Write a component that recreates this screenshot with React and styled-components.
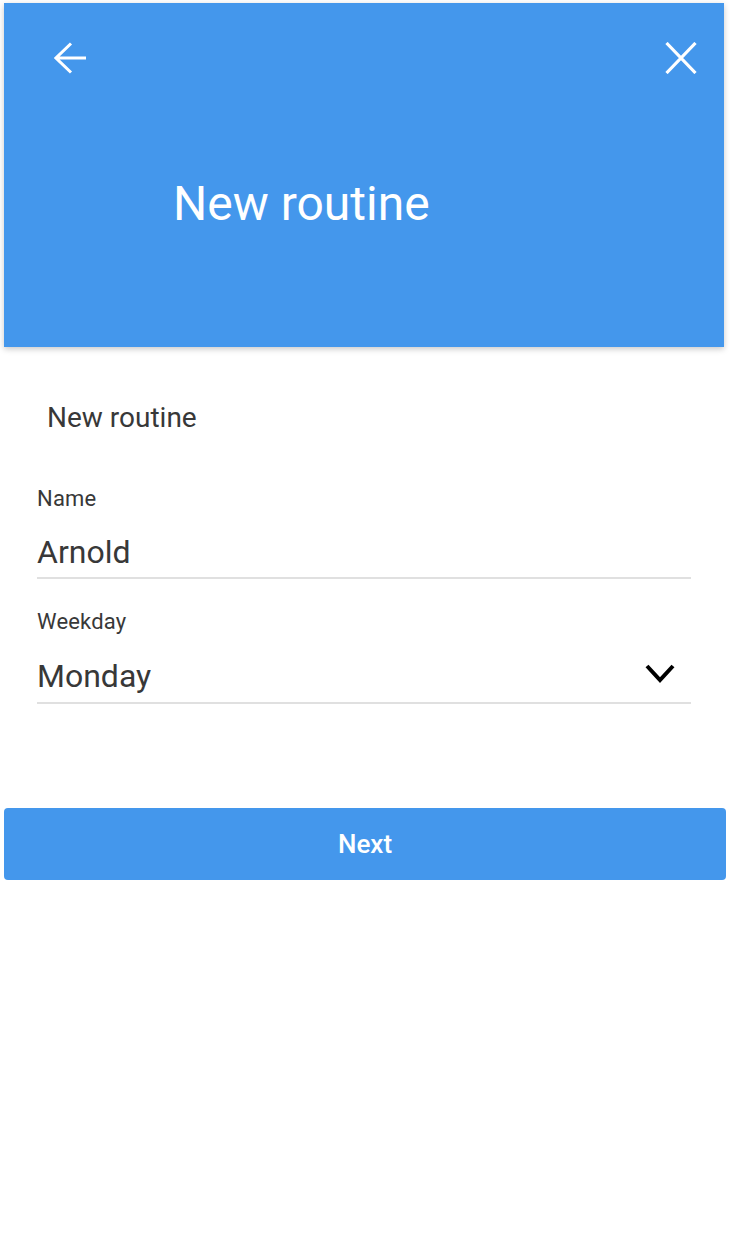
import { useState } from 'react';
import styled, { createGlobalStyle } from 'styled-components';

const WEEKDAYS = ['Monday', 'Tuesday', 'Wednesday', 'Thursday', 'Friday', 'Saturday', 'Sunday'];

const GlobalStyle = createGlobalStyle`
  body {
    margin: 0;
    background: #ffffff;
    font-family: Roboto, "Liberation Sans", Arial, sans-serif;
  }
`;

const BackIcon = () => (
  <svg width="32" height="32" viewBox="0 0 32 32" fill="none" aria-hidden>
    <path d="M17 1.5 L2 16 L17 30.5 M2 16 H32" stroke="#fff" strokeWidth="3" />
  </svg>
);

const CloseIcon = () => (
  <svg width="32" height="32" viewBox="0 0 32 32" fill="none" aria-hidden>
    <path d="M1.5 1 L30.5 31 M30.5 1 L1.5 31" stroke="#fff" strokeWidth="3.2" />
  </svg>
);

const ChevronIcon = () => (
  <svg width="30" height="22" viewBox="0 0 30 22" fill="none" aria-hidden>
    <path d="M2 3 L15 17 L28 3" stroke="#000" strokeWidth="4" />
  </svg>
);

const App = () => {
  const [name, setName] = useState('Arnold');
  const [weekday, setWeekday] = useState('Monday');

  return (
    <Page>
      <GlobalStyle />
      <Header>
        <TopBar>
          <IconButton type="button" aria-label="Back">
            <BackIcon />
          </IconButton>
          <IconButton type="button" aria-label="Close">
            <CloseIcon />
          </IconButton>
        </TopBar>
        <Title>New routine</Title>
      </Header>

      <Form onSubmit={(e) => e.preventDefault()}>
        <Subtitle>New routine</Subtitle>

        <Field>
          <Label htmlFor="routine-name">Name</Label>
          <TextInput
            id="routine-name"
            value={name}
            onChange={(e) => setName(e.target.value)}
          />
        </Field>

        <Field>
          <Label htmlFor="routine-weekday">Weekday</Label>
          <SelectWrap>
            <Select
              id="routine-weekday"
              value={weekday}
              onChange={(e) => setWeekday(e.target.value)}
            >
              {WEEKDAYS.map((d) => (
                <option key={d} value={d}>{d}</option>
              ))}
            </Select>
            <Chevron>
              <ChevronIcon />
            </Chevron>
          </SelectWrap>
        </Field>
      </Form>

      <NextButton type="button">Next</NextButton>
    </Page>
  );
};

const Page = styled.div`
  padding: 3px 4px 40px;
  width: 722px;
  box-sizing: content-box;
`;

const Header = styled.header`
  width: 720px;
  height: 344px;
  box-sizing: border-box;
  padding: 39px 27px 0 50px;
  background-color: #4497ec;
  box-shadow: 0 2px 6px rgba(0, 0, 0, 0.22);
`;

const TopBar = styled.div`
  display: flex;
  justify-content: space-between;
  align-items: center;
  height: 32px;
`;

const IconButton = styled.button`
  width: 32px;
  height: 32px;
  padding: 0;
  border: none;
  background: transparent;
  display: flex;
  cursor: pointer;
`;

const Title = styled.h1`
  margin: 106px 0 0 119px;
  font-size: 48px;
  line-height: 48px;
  font-weight: 400;
  color: #ffffff;
`;

const Form = styled.form`
  display: flex;
  flex-direction: column;
  gap: 30px;
  padding: 0 35px 0 33px;
`;

const Subtitle = styled.h2`
  margin: 55px 0 22px 10px;
  font-size: 28px;
  line-height: 32px;
  font-weight: 400;
  color: #383838;
`;

const Field = styled.div`
  display: flex;
  flex-direction: column;
  gap: 20px;
`;

const Label = styled.label`
  font-size: 22px;
  line-height: 26px;
  color: #383838;
  letter-spacing: 0.2px;
`;

const TextInput = styled.input`
  height: 40px;
  padding: 0 0 5px;
  margin: 0;
  box-sizing: content-box;
  border: none;
  border-bottom: 2px solid #e0e0e0;
  outline: none;
  background: transparent;
  font-family: inherit;
  font-size: 32px;
  line-height: 40px;
  color: #383838;
`;

const SelectWrap = styled.div`
  position: relative;
  display: flex;
`;

const Select = styled.select`
  flex: 1;
  height: 49px;
  padding: 0 0 5px;
  margin: 0;
  box-sizing: border-box;
  border: none;
  border-bottom: 2px solid #e0e0e0;
  border-radius: 0;
  outline: none;
  background: transparent;
  appearance: none;
  font-family: inherit;
  font-size: 32px;
  line-height: 40px;
  color: #383838;
  cursor: pointer;
`;

const Chevron = styled.span`
  position: absolute;
  right: 16px;
  top: 8px;
  display: flex;
  pointer-events: none;
`;

const NextButton = styled.button`
  display: block;
  width: 722px;
  height: 72px;
  margin-top: 104px;
  border: none;
  border-radius: 4px;
  background-color: #4497ec;
  color: #ffffff;
  font-family: inherit;
  font-size: 26px;
  font-weight: 500;
  cursor: pointer;
`;

export default App;
